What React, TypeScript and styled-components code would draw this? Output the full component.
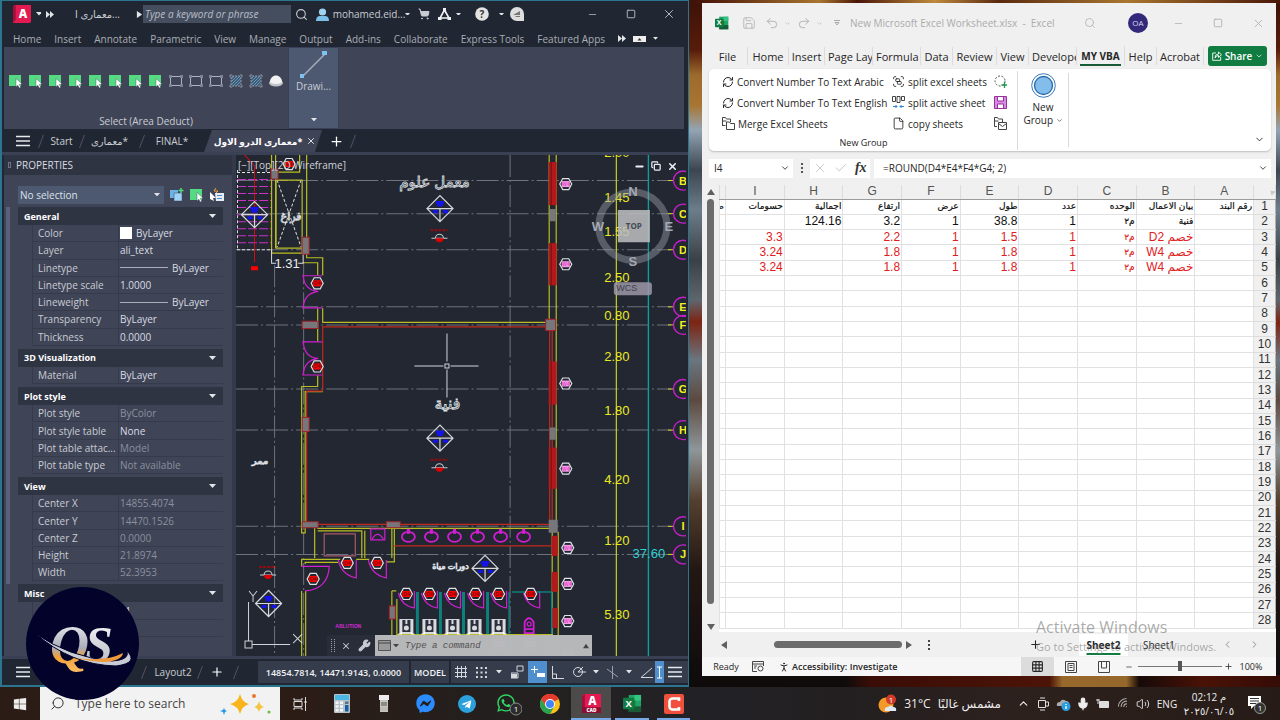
import React from 'react';
import styled, { createGlobalStyle, css } from 'styled-components';
import { Search, ShoppingCart, Save, Undo2, Redo2, X, Minus, Square, Plus, ChevronDown, ChevronUp, ChevronLeft, ChevronRight, Check, Wrench, RefreshCw, File, Group, Copy, Mic, Wifi, Volume2, Grid3x3, PersonStanding } from 'lucide-react';
import { FaWhatsapp, FaTelegramPlane, FaFacebookMessenger, FaWindows } from 'react-icons/fa';

const UI = '"Open Sans", "Noto Sans", "DejaVu Sans", sans-serif';
const SHEET = '"Liberation Sans", "DejaVu Sans", sans-serif';

const Global = createGlobalStyle`
  *, *::before, *::after { box-sizing: border-box; }
  body { margin: 0; background: #14100f; font-family: ${UI}; font-size: 10px; overflow: hidden; }
  button, input { font: inherit; color: inherit; margin: 0; padding: 0; border: 0; background: none; }
  button { display: inline-flex; align-items: center; justify-content: center; white-space: nowrap; }
  svg { flex: none; display: block; }
  h2, h3, dl, dd, p { margin: 0; font-weight: inherit; }
`;

const Page = styled.div`
  height: 100vh;
  display: flex;
  flex-direction: column;
`;

const Desktop = styled.main`
  flex: 1;
  min-height: 0;
  display: grid;
  grid-template-columns: minmax(0, 689fr) minmax(0, 574fr);
  gap: 13px;
  padding-right: 4px;
  background:
    linear-gradient(90deg, transparent 66%, #3a0d06 68%, #4d1408 82%, #96682b 83%, #96682b 88%, #160a08 89%, #4a1207 94%, #350c06) bottom / 100% 12px no-repeat,
    linear-gradient(90deg, transparent 54%, #4a1608 55%, #a9762f 64%, #4a1608 67%, #c08a3c 73%, #5a2a10 78%, #a9762f 88%, #4a1608) top / 100% 4px no-repeat,
    linear-gradient(180deg, #3d1208 0, #571c0a 50px, #9c6a2c 75px, #a87532 105px, #93a4b3 130px, #3c4650 170px, #6d7d8a 210px, #3a4146 260px, #5e666d 300px, #7d2412 322px, #6a7680 360px, #5c4a40 400px, #8f9699 450px, #54402f 500px, #231713 570px, #0e0b0b 687px);
`;

const Ico = styled.span<{ $w: number }>`
  flex: 0 0 ${p => p.$w}px;
  display: inline-flex;
  align-items: center;
  justify-content: center;
  overflow: hidden;
  white-space: nowrap;
`;
const IconButton = styled.button<{ $w: number; $on?: boolean }>`
  flex: 0 0 ${p => p.$w}px;
  align-self: stretch;
  ${p => p.$on && css`background: #4f8fcd;`}
`;
const Spring = styled.span`flex: 1;`;
const Loupe = styled(Search)`transform: scaleX(-1);`;
const Signal = styled(Wifi)`transform: rotate(-45deg);`;
const InlineChevron = styled(ChevronDown)`display: inline;`;

/* ---------- CAD window ---------- */
const CadWindow = styled.section`
  display: flex;
  flex-direction: column;
  min-width: 0;
  min-height: 0;
  border: 1px solid #2c7590;
  border-left-width: 2px;
  border-bottom-width: 2px;
  background: #212732;
  color: #c9ccd2;
`;
const CadTitle = styled.header`
  flex: 0 0 26px;
  display: flex;
  align-items: center;
  padding-left: 6px;
`;
const CadSearch = styled.input`
  flex: 0 0 148px;
  height: 18px;
  padding: 0 2px;
  background: #454e5f;
  font-style: italic;
  &::placeholder { color: #b9bec8; opacity: 1; }
`;
const CadMenu = styled.nav`
  flex: 0 0 20px;
  display: flex;
  align-items: center;
  gap: 13px;
  padding: 3px 0 0 11px;
  font-size: 10px;
  color: #a9adb6;
  overflow: hidden;
`;
const MenuMore = styled.span`
  display: flex;
  align-items: center;
  gap: 7px;
`;
const CadRibbon = styled.div`
  flex: 0 0 82px;
  display: flex;
  margin: 0 4px 0 2px;
  background: #3f4457;
`;
const DeductPanel = styled.div`
  flex: 0 0 284px;
  display: grid;
  grid-template-rows: 67px 15px;
  justify-items: center;
  font-size: 10px;
`;
const DeductTools = styled.div`
  display: flex;
  align-items: center;
`;
const DrawButton = styled.button`
  width: 51px;
  border: 1px solid #39405a;
  background: #4d5970;
  flex-direction: column;
  justify-content: flex-start;
  padding: 3px 0;
`;
const DrawLabel = styled.span`margin-bottom: 25px;`;
const FileTabs = styled.div`
  flex: 0 0 26px;
  display: flex;
  align-items: center;
  border-bottom: 3px solid #3b4155;
  padding: 1px 0 0 13px;
  font-size: 10px;
`;
const FileTab = styled.button<{ $w: number; $active?: boolean }>`
  flex: 0 0 ${p => p.$w}px;
  min-width: 0;
  height: 22px;
  ${p => p.$active && css`
    background: #3f4457;
    color: #fff;
    font-weight: 700;
    font-size: 9px;
    gap: 4px;
    padding-left: 4px;
    clip-path: polygon(8px 0, 100% 0, calc(100% - 7px) 100%, 0 100%);
  `}
`;
const CadBody = styled.div`
  flex: 1;
  min-height: 0;
  display: flex;
`;

const Panel = styled.aside`
  flex: 0 0 232px;
  display: flex;
  flex-direction: column;
  margin-left: 2px;
  background: #3f4457;
  border-right: 4px solid #343a4b;
`;
const PanelHead = styled.h2`
  flex: 0 0 20px;
  display: flex;
  align-items: center;
  gap: 5px;
  padding-left: 4px;
  background: #2f3442;
  font-size: 10px;
  color: #d9dbe0;
`;
const Grip = styled.span`
  width: 3px;
  height: 6px;
  border: 1px solid #6d7382;
`;
const Picker = styled.div`
  flex: 0 0 32px;
  display: flex;
  align-items: center;
  padding: 7px 0 0 14px;
  gap: 6px;
`;
const SelectBox = styled.select`
  width: 146px;
  height: 18px;
  border: 0;
  padding: 0 2px;
  appearance: none;
  background: #4c5970;
  color: #dfe2e8;
  font: 10px ${UI};
`;
const SelectWrap = styled.label`
  position: relative;
  display: block;
  & > svg { position: absolute; right: 4px; top: 7px; }
`;
const PropArea = styled.div`
  flex: 1;
  min-height: 0;
  display: flex;
  padding: 0 9px 16px 2px;
  gap: 8px;
  overflow: hidden;
`;
const PanelScroll = styled.div`
  width: 4px;
  height: 87%;
  background: #59627a;
`;
const PropList = styled.div`
  flex: 1;
  display: flex;
  flex-direction: column;
`;
const PropGroup = styled.section<{ $rows: number }>`
  flex: ${p => p.$rows} 0 auto;
  display: flex;
  flex-direction: column;
  margin-bottom: 3px;
`;
const GroupHead = styled.h3`
  flex: 0 0 18px;
  display: flex;
  align-items: center;
  justify-content: space-between;
  padding: 0 7px 0 6px;
  background: #2f3442;
  color: #fff;
  font-weight: 700;
  font-size: 9px;
`;
const PropRows = styled.dl`
  flex: 1;
  display: flex;
  flex-direction: column;
  margin-left: 14px;
  border-left: 1px solid #363b4c;
`;
const PropRow = styled.div`
  flex: 1 0 17px;
  display: grid;
  grid-template-columns: 86px 1fr;
  align-items: stretch;
  border-bottom: 1px solid #363b4c;
`;
const PropName = styled.dt`
  display: flex;
  align-items: center;
  padding-left: 5px;
  border-right: 1px solid #363b4c;
  white-space: nowrap;
`;
const PropValue = styled.dd<{ $dim?: boolean }>`
  display: flex;
  align-items: center;
  gap: 4px;
  padding-left: 1px;
  white-space: nowrap;
  color: ${p => (p.$dim ? '#8b909d' : '#dadce2')};
`;
const Swatch = styled.span`width: 12px; height: 12px; background: #fff;`;
const Rule = styled.span`width: 48px; height: 1px; background: #a9aebb;`;

const Viewport = styled.div`
  position: relative;
  flex: 1;
  min-width: 0;
  margin-right: 2px;
  overflow: hidden;
  background: #222732;
`;
const Canvas = styled.svg`
  position: absolute;
  inset: 0;
  width: 100%;
  height: 100%;
`;
const ViewLabel = styled.div`
  position: absolute;
  left: 2px;
  top: 3px;
  font-size: 10px;
  color: #cfd2d8;
`;
const ViewButtons = styled.div`
  position: absolute;
  right: 6px;
  top: 3px;
  display: flex;
  height: 16px;
  color: #eceef1;
`;
const CommandBar = styled.label`
  position: absolute;
  left: 91px;
  right: 94px;
  bottom: 0;
  height: 21px;
  display: flex;
  align-items: center;
  background: rgba(42, 47, 58, 0.9);
`;
const CommandField = styled.span`
  flex: 1;
  height: 21px;
  display: flex;
  align-items: center;
  gap: 2px;
  padding: 0 3px;
  background: rgba(214, 214, 214, 0.82);
  color: #444;
`;
const CommandInput = styled.input`
  flex: 1;
  min-width: 0;
  font: italic 9px "Liberation Mono", monospace;
  padding-left: 4px;
  &::placeholder { color: #505050; opacity: 1; }
`;
const CadStatus = styled.footer`
  flex: 0 0 29px;
  display: flex;
  align-items: center;
  border-top: 3px solid #3a4053;
  padding-left: 13px;
  overflow: hidden;
`;
const StatusCell = styled.button<{ $w: number }>`
  flex: 0 0 ${p => p.$w}px;
  height: 22px;
  margin-right: 2px;
  background: #353c4c;
  color: #f2f3f5;
  font-size: 9px;
  font-weight: 600;
`;
const StatusTools = styled.div`
  flex: 1;
  height: 22px;
  display: flex;
  background: #353c4c;
  overflow: hidden;
`;

/* ---------- Spreadsheet window ---------- */
const XlWindow = styled.section`
  display: flex;
  flex-direction: column;
  min-width: 0;
  min-height: 0;
  margin: 3px 0 11px;
  background: #f0f0f0;
  color: #262626;
`;
const XlTitle = styled.header`
  flex: 0 0 40px;
  display: flex;
  align-items: center;
  padding-left: 7px;
  color: #ababab;
`;
const Avatar = styled.span`
  width: 20px;
  height: 20px;
  border-radius: 50%;
  background: #33287a;
  color: #dcd9f0;
  font-size: 8px;
  line-height: 20px;
  text-align: center;
`;
const XlTabs = styled.nav`
  flex: 0 0 26px;
  display: flex;
  align-items: center;
  padding: 0 9px 0 6px;
`;
const XlTab = styled.button<{ $w: number; $active?: boolean; $cut?: boolean }>`
  flex: 0 1 ${p => p.$w}px;
  min-width: 0;
  height: 18px;
  overflow: hidden;
  border-right: 1px solid #dcdcdc;
  font-size: 11px;
  ${p => p.$cut && css`justify-content: flex-start; padding-left: 3px;`}
  ${p => p.$active && css`
    height: 20px;
    font-weight: 700;
    font-size: 10px;
    background: linear-gradient(#185c37, #185c37) center bottom / 41px 2px no-repeat;
  `}
`;
const Share = styled.button`
  margin-left: auto;
  width: 59px;
  height: 20px;
  gap: 3px;
  border-radius: 3px;
  background: #107c41;
  color: #fff;
  font-size: 10px;
  font-weight: 600;
`;
const XlRibbon = styled.div`
  flex: 0 0 82px;
  display: flex;
  margin: 0 5px 0 7px;
  border-radius: 5px;
  background: #fff;
  box-shadow: 0 1px 2px #bdbdbd;
`;
const XlGroup = styled.div`
  flex: 0 0 309px;
  display: grid;
  grid-template-columns: 170px 102px 1fr;
  grid-template-rows: repeat(3, 21px) 16px;
  align-items: center;
  margin: 2px 0 1px;
  padding-left: 13px;
  border-right: 1px solid #dadada;
  font-size: 10px;
`;
const Cmd = styled.button`
  justify-content: flex-start;
  gap: 3px;
  height: 21px;
`;
const GroupName = styled.div`
  grid-column: 1 / -1;
  padding-right: 12px;
  text-align: center;
  font-size: 9px;
`;
const BigButton = styled.button`
  flex: 0 0 51px;
  flex-direction: column;
  justify-content: flex-start;
  margin: 4px 0;
  border-right: 1px solid #dadada;
  line-height: 13px;
  gap: 3px;
`;
const RibbonEnd = styled.button`margin: auto 6px 6px auto;`;
const FormulaRow = styled.div`
  flex: 0 0 34px;
  display: flex;
  align-items: center;
  gap: 4px;
  padding: 0 5px 0 7px;
`;
const FieldBox = styled.label<{ $w?: number }>`
  flex: ${p => (p.$w ? `0 0 ${p.$w}px` : '1')};
  height: 19px;
  min-width: 0;
  display: flex;
  align-items: center;
  padding: 0 3px 0 5px;
  background: #fff;
`;
const FormulaBox = styled(FieldBox)`padding-left: 9px;`;
const FieldInput = styled.input`
  flex: 1;
  min-width: 0;
  font-size: 10px;
`;
const FxBox = styled.div`
  flex: 0 0 60px;
  height: 19px;
  display: flex;
  align-items: center;
  justify-content: space-around;
  background: #fff;
  color: #b5b5b5;
`;
const Fx = styled.span`
  font: italic 700 14px "Liberation Serif", serif;
  color: #333;
`;
const SheetArea = styled.div`
  flex: 1;
  min-height: 0;
  display: flex;
`;
const VBar = styled.div`
  flex: 0 0 17px;
  display: flex;
  flex-direction: column;
  align-items: center;
  gap: 3px;
  padding: 3px 0 1px;
`;
const VThumb = styled.span`
  flex: 1;
  width: 7px;
  border-radius: 4px;
  background: #6c6c6c;
  margin-bottom: 16px;
`;
const SheetBox = styled.div`
  flex: 1;
  min-width: 0;
  padding-bottom: 3px;
  background: #fff;
`;
const Sheet = styled.table`
  width: 100%;
  height: 100%;
  table-layout: fixed;
  border-collapse: collapse;
  font: 12px ${SHEET};
  line-height: 13px;
`;
const ColHead = styled.th<{ $w?: number }>`
  height: 14px;
  width: ${p => (p.$w ? `${p.$w}px` : 'auto')};
  padding: 0;
  background: #f0f0f0;
  border: solid #dcdcdc;
  border-width: 0 1px;
  border-bottom: 1px solid #9c9c9c;
  color: #555;
  font-weight: 400;
`;
const RowHead = styled.th`
  padding: 0;
  background: #f0f0f0;
  border-bottom: 1px solid #dcdcdc;
  border-right: 1px solid #b0b0b0;
  border-left: 0;
  color: #333;
  font-weight: 400;
`;
const Cell = styled.td<{ $red?: boolean; $ar?: boolean }>`
  padding: 0 1px;
  border: 1px solid #e1e1e1;
  text-align: right;
  white-space: nowrap;
  overflow: hidden;
  color: ${p => (p.$red ? '#e0201c' : '#111')};
  ${p => p.$ar && css`font-size: 9px; -webkit-text-stroke: 0.2px;`}
`;
const SheetTabs = styled.div`
  position: relative;
  flex: 0 0 25px;
  display: flex;
  align-items: center;
  background: #f0f0f0;
  font-size: 10px;
  padding-left: 18px;
`;
const HThumb = styled.span`
  flex: 0 0 128px;
  height: 7px;
  margin: 0 3px 0 46px;
  border-radius: 4px;
  background: #6c6c6c;
`;
const SheetTab = styled.button<{ $on?: boolean }>`
  width: ${p => (p.$on ? 49 : 62)}px;
  height: 22px;
  ${p => p.$on && css`
    background: #fff;
    font-weight: 700;
    text-decoration: underline #107c41 2px;
    text-underline-offset: 4px;
  `}
`;
const Watermark = styled.div`
  position: absolute;
  right: 50px;
  bottom: 1px;
  width: 190px;
  color: rgba(120, 120, 120, 0.62);
  font-size: 16px;
  line-height: 21px;
  white-space: nowrap;
  pointer-events: none;
`;
const WatermarkNote = styled.div`
  font-size: 11px;
  line-height: 18px;
`;
const XlStatus = styled.footer`
  flex: 0 0 19px;
  display: flex;
  align-items: center;
  padding-left: 2px;
  background: #f6f6f6;
  font-size: 9px;
`;
const Access = styled.button`
  gap: 2px;
  font-weight: 600;
  font-size: 9px;
`;
const ViewBtn = styled.button<{ $on?: boolean }>`
  width: 33px;
  height: 19px;
  background: ${p => (p.$on ? '#dcdcdc' : 'none')};
`;
const Zoom = styled.input`
  flex: 0 0 84px;
  width: 84px;
  min-width: 0;
  height: 12px;
  appearance: none;
  &::-webkit-slider-runnable-track { height: 1px; background: #777; }
  &::-webkit-slider-thumb { appearance: none; width: 4px; height: 10px; margin-top: -5px; background: #555; }
`;

/* ---------- Taskbar ---------- */
const Taskbar = styled.footer`
  flex: 0 0 33px;
  display: flex;
  align-items: center;
  padding-right: 4px;
  background: linear-gradient(90deg, #2c1c16 0, #2c1c16 23%, #241f1d 36%, #222226 56%, #231f20 66%, #2d211e 80%, #271b18 100%);
  color: #eee;
`;
const StartButton = styled.button`
  width: 40px;
  align-self: stretch;
`;
const TaskSearch = styled.label`
  flex: 0 0 240px;
  min-width: 0;
  align-self: stretch;
  display: flex;
  align-items: center;
  gap: 10px;
  padding-left: 10px;
  background: #f2f2f2;
  color: #333;
`;
const TaskInput = styled.input`
  flex: 1;
  width: 100%;
  min-width: 0;
  font-size: 12px;
  &::placeholder { color: #444; opacity: 1; }
`;
const TaskButton = styled.button<{ $w: number; $open?: boolean; $hot?: boolean }>`
  flex: 0 0 ${p => p.$w}px;
  align-self: stretch;
  ${p => p.$open && css`box-shadow: inset 0 -2px 0 #76a9e6;`}
  ${p => p.$hot && css`background: #4d4a4a;`}
`;
const Weather = styled.button`
  gap: 7px;
  font-size: 12px;
  margin-right: 12px;
`;
const Clock = styled.time`
  flex: 0 0 56px;
  text-align: center;
  font-size: 10px;
  line-height: 14px;
  white-space: nowrap;
`;
const ChannelLogo = styled.div`
  position: fixed;
  left: 26px;
  bottom: 20px;
  width: 113px;
  height: 113px;
  border-radius: 50%;
  overflow: hidden;
  background: #03022b;
`;

/* ---------- Small drawings ---------- */
const Caret = ({ c = '#e3e5e9', s = 7 }: { c?: string; s?: number }) => (
  <svg width={s} height={s / 7 * 4} viewBox="0 0 7 4"><path d="M0 0h7L3.5 4z" fill={c} /></svg>
);
const Tri = ({ r = 0, c = '#606060', s = 8 }: { r?: number; c?: string; s?: number }) => (
  <svg width={s} height={s} viewBox="0 0 8 8"><path d="M4 1l4 6H0z" fill={c} transform={`rotate(${r} 4 4)`} /></svg>
);
const Fast = () => (
  <svg width="8" height="7" viewBox="0 0 8 7"><path d="M0 0l4 3.500-4 3.500zM4 0l4 3.500-4 3.500z" fill="#e3e5e9" /></svg>
);
const Slash = () => (
  <svg width="6" height="13" viewBox="0 0 6 13"><path d="M5.500 0L.5 13" stroke="#4d5464" /></svg>
);
const Bars = ({ c = '#e8eaee' }: { c?: string }) => (
  <svg width="14" height="12" viewBox="0 0 14 12"><path d="M0 1.500h14M0 6h14M0 10.500h14" stroke={c} strokeWidth="1.600" /></svg>
);
const GreenPick = () => (
  <svg width="14" height="14" viewBox="0 0 14 14"><path d="M0 1h12v11H0z" fill="#55da84" /><path d="M7 4.500l6 5.500-2.800.4 1.600 2.900-1.600.6-1.500-2.900L7 13z" fill="#fff" stroke="#3f4457" strokeWidth=".4" /></svg>
);
const BoxIcon = ({ hatch }: { hatch?: boolean }) => (
  <svg width="14" height="14" viewBox="0 0 14 14" fill="none">
    {hatch ? <><path d="M2 2h10v10H2z" fill="#3f5a72" /><path d="M2 5l3-3M2 8l6-6M2 11l9-9M4 12l8-8M7 12l5-5" stroke="#72b2da" strokeWidth=".7" /><path d="M2 0v14M12 0v14M0 2h14M0 12h14" stroke="#8f95a5" strokeDasharray="2 1" /></>
      : <><path d="M1.500 2.500h11v9h-11z" stroke="#aeb3c0" /><path d="M0 1h3v3H0zM11 1h3v3h-3zM0 10h3v3H0zM11 10h3v3h-3z" fill="#7c8396" /></>}
  </svg>
);
const Dome = () => (
  <svg width="14" height="12" viewBox="0 0 14 12"><ellipse cx="7" cy="8" rx="7" ry="3.500" fill="#bfc3c9" /><path d="M1 7c0-4 3-6.500 6-6.500S13 3 13 7c-1 2.500-11 2.500-12 0z" fill="#f2f2f2" /></svg>
);
const ExcelLogo = ({ s }: { s: number }) => (
  <svg width={s} height={s} viewBox="0 0 20 20">
    <path d="M6 1h13v18H6z" fill="#21a366" /><path d="M12 1h7v6h-7z" fill="#33c481" /><path d="M6 7h7v6H6z" fill="#107c41" /><path d="M6 13h13v6H6z" fill="#185c37" />
    <rect x="0" y="4" width="12" height="12" rx="1" fill="#107c41" /><text x="6" y="13.500" textAnchor="middle" fontFamily="Open Sans" fontWeight="700" fontSize="10" fill="#fff">X</text>
  </svg>
);
const CadLogo = ({ s, sub }: { s: number; sub?: boolean }) => (
  <svg width={s} height={s} viewBox="0 0 20 20">
    <path d="M2 0h18v18a2 2 0 0 1-2 2H0V2z" fill="#e21a51" /><path d="M0 2l3-2v16l-3 4z" fill="#a30f38" />
    <text x="11" y={sub ? 12 : 14} textAnchor="middle" fontFamily="Open Sans" fontWeight="800" fontSize={sub ? 12 : 13} fill="#fff">A</text>
    {sub && <><path d="M0 14h20v6H0z" fill="#8e0d33" /><text x="10" y="19" textAnchor="middle" fontFamily="Open Sans" fontWeight="800" fontSize="5" fill="#fff">CAD</text></>}
  </svg>
);
const CalcIcon = () => (
  <svg width="16" height="19" viewBox="0 0 16 19"><rect width="16" height="19" rx="1" fill="#b9c2c8" /><path d="M1 1h14v5H1z" fill="#4bb7e4" /><path d="M1.500 7.500h3v2.500h-3zM6 7.500h3v2.500H6zM1.500 11.200h3v2.500h-3zM6 11.200h3v2.500H6zM1.500 15h3v2.500h-3zM6 15h3v2.500H6z" fill="#f3f5f6" /><path d="M11 7.500h3.500V10H11z" fill="#5a7186" /><path d="M11 11h3.500v6.500H11z" fill="#1261a6" /></svg>
);
const DeviceIcon = () => (
  <svg width="10" height="19" viewBox="0 0 10 19"><path d="M0 1h10v5H0z" fill="#ececec" /><path d="M1 6h8v12H1z" fill="#c9c6c1" /><path d="M2 8h6v4H2z" fill="#8d8984" /><path d="M1 14h8M1 16h8" stroke="#a5a19c" strokeWidth=".6" /></svg>
);
const ChromeIcon = () => (
  <svg width="20" height="20" viewBox="0 0 20 20">
    <circle cx="10" cy="10" r="10" fill="#fbc116" /><path d="M10 10L1.340 5A10 10 0 0 1 18.660 5z" fill="#e33b2e" /><path d="M10 5h8.700a10 10 0 0 0-17.400 0L5.700 12.500z" fill="#e33b2e" /><path d="M1.340 5A10 10 0 0 0 10 20l4.300-7.500H5.700z" fill="#29a352" /><circle cx="10" cy="10" r="5" fill="#fff" /><circle cx="10" cy="10" r="4" fill="#4285f4" />
  </svg>
);
const Recorder = () => (
  <svg width="20" height="20" viewBox="0 0 20 20"><rect width="20" height="20" rx="2" fill="#f0503c" /><path d="M15 7V4.500H8.500A3 3 0 0 0 5.500 7.500v5a3 3 0 0 0 3 3H15V13" fill="none" stroke="#fff" strokeWidth="2.600" /></svg>
);
const Sparkles = () => (
  <svg width="62" height="26" viewBox="0 0 62 26">
    <path d="M22 3q2 8 9 10-7 2-9 10-2-8-10-10 8-2 10-10z" fill="#f8b51c" /><path d="M41 10q1 5 5 6-4 1-5 5-1-4-5-5 4-1 5-6z" fill="#f4c542" /><circle cx="36" cy="5" r="2" fill="#e8772c" /><circle cx="51" cy="21" r="1.600" fill="#6cc04a" /><path d="M6 17l1 2 2 1-2 1-1 3-1-3-3-1 3-1z" fill="#1e9be0" />
  </svg>
);

const QsLogo = () => (
  <svg width="113" height="113" viewBox="0 0 113 113">
    <defs>
      <linearGradient id="silver" x1="0" y1="0" x2="0" y2="1"><stop offset="0" stopColor="#fff" /><stop offset=".55" stopColor="#a9adb8" /><stop offset=".7" stopColor="#f0a03a" /><stop offset="1" stopColor="#ffc36b" /></linearGradient>
      <linearGradient id="silver2" x1="0" y1="0" x2="0" y2="1"><stop offset="0" stopColor="#fff" /><stop offset="1" stopColor="#a9adb8" /></linearGradient>
    </defs>
    <g fontFamily="Liberation Serif" fontStyle="italic">
      <text x="24" y="76" fontSize="54" fontWeight="700" fill="url(#silver)">Q</text>
      <text x="59" y="74" fontSize="50" fontWeight="700" fill="url(#silver2)">S</text>
    </g>
    <path d="M9 46Q42 70 86 74Q104 73 101 64Q113 76 90 79Q45 78 9 46z" fill="#c9ccd4" stroke="#03022b" />
    <path d="M50 71Q80 75 97 66Q96 74 78 75Q62 74 50 71z" fill="#f0993a" />
  </svg>
);

/* ---------- Floor plan ---------- */
const axes: [string, number][] = [['B', 180], ['C', 213], ['D', 249], ['E', 306], ['F', 324], ['G', 388], ['H', 429], ['I', 525], ['J', 553]];
const dims: [string, number][] = [['2.00', 152], ['1.45', 197], ['1.55', 231], ['2.50', 277], ['0.80', 315], ['2.80', 356], ['1.80', 409], ['4.20', 478], ['1.20', 539], ['5.30', 613]];

const Hex = ({ x, y, tone, label }: { x: number; y: number; tone: string; label: string }) => (
  <g transform={`translate(${x} ${y})`}>
    <path d="M-6 0l3-5.500h6l3 5.500-3 5.500h-6z" fill="#222732" stroke="#e0e2e6" strokeWidth="1.200" />
    <path d="M-4-3h8v6h-8z" fill={tone} />
    <text y="2" textAnchor="middle" fontSize="5" fontWeight="700" fill={tone === '#f00' ? '#8e0000' : '#e050c8'}>{label}</text>
  </g>
);
const Diamond = ({ x, y }: { x: number; y: number }) => (
  <g transform={`translate(${x} ${y})`} fill="none" stroke="#d5d8dd">
    <path d="M-13 0L0-13 13 0 0 13zM-13 0h26M0 0v13" strokeWidth="1.200" />
    <path d="M-4-6h8M-3-3.500h6" stroke="#1414e6" strokeWidth="3" />
    <path d="M-7 3h5M3 3h5" stroke="#1414e6" strokeWidth="3" />
  </g>
);
const Level = ({ x, y }: { x: number; y: number }) => (
  <g transform={`translate(${x} ${y})`}>
    <path d="M-8 0h16M-4 0a4 4 0 0 1 8 0" fill="none" stroke="#c8cbd0" />
    <path d="M-4 0a4 4 0 0 0 8 0z" fill="#e00000" />
    <path d="M-9-8h17" stroke="#8e0d12" strokeWidth="2" strokeDasharray="3 1" />
  </g>
);
const Pan = ({ x }: { x: number }) => (
  <g transform={`translate(${x} 625)`}>
    <path d="M-7-7h14v15h-14z" fill="#d9dbdf" /><path d="M-4-6h3v4h-3zM1-6h3v4H1zM-4-2h8v8h-8z" fill="#2b303c" /><circle cy="2" r="2.500" fill="#d9dbdf" /><path d="M-8 8h3v-2M8 8H5V6" stroke="#fff" fill="none" />
  </g>
);

const Plan = () => (
  <Canvas viewBox="236 155 449 501" preserveAspectRatio="xMinYMin slice" fontFamily="Liberation Sans, DejaVu Sans, sans-serif" fill="none">
    <g stroke="#6d727c" strokeDasharray="22 3 2 3">
      {axes.map(([n, y]) => <path key={n} d={`M236 ${y + .5}H670`} />)}
      <path d="M274.500 265V656M303.500 262V656M509.500 155V656" />
    </g>
    <g>
      {Array.from({ length: 12 }, (_, i) => (
        <path key={i} d={`M237 ${172.500 + i * 7}H271`} stroke={i % 11 === 0 ? '#e5e5e5' : '#c733c7'} strokeDasharray={i % 11 === 0 ? '3 2' : '9 2'} />
      ))}
      <path d="M237.500 170V249M277 180L301 247M301 180L277 247" stroke="#d8d8d8" strokeDasharray="3 2" />
      <path d="M242 152L254.500 166V262" stroke="#d00f14" />
      <path d="M251 266h7v4h-7z" fill="#f00" />
    </g>
    <g stroke="#b9bd23" strokeWidth="1.200">
      <path d="M271.500 155V253H302V180H276V248H302M275.500 155V248M299.500 155V172H278M306.500 155V257.500H322.500V275M302.500 262.500H317.500V275M322.500 308V322H548M317.500 308V341M317.500 375V386H301.500V532H305V391H322.500" />
      <path d="M317 527.500H549M314.500 527V557M317.500 530H361.500V557M364.500 530V557M391.500 527V557M394 527V561H386M301.500 565V558.500H340M305 563V561.500H338M356 558.500H369M301.500 590V656M305.500 590V656M391.500 590H396M391.500 590V636M396.500 598V636M396 633.500H552" />
      <path d="M548.500 155V322M555.500 155V520M551.500 531V656M557.500 531V656" />
      <path d="M615.500 155V656" stroke="#cdcf20" />
    </g>
    <path d="M271.500 249V263H276M303 249V263H298" stroke="#ddd" />
    <g stroke="#c22a1d" strokeWidth="1.200">
      <path d="M322.500 390V326.500H549V523.500H306.500V390.500H322M549 330V519M551.500 330V519M394 545H551" />
    </g>
    <g fill="#b3191b">
      {[[162, 43], [243, 42], [361, 43], [447, 41]].map(([y, h]) => <path key={y} d={`M548 ${y}h8v${h}h-8z`} />)}
      {[535, 571, 607].map(y => <path key={y} d={`M551 ${y}h6v20h-6z`} />)}
      <path d="M553 636h5v20h-5z" opacity=".7" />
    </g>
    <path d="M550.500 162V205M550.500 243V285M550.500 361V404M550.500 447V488" stroke="#6e1216" />
    <g fill="#77777b" stroke="#a3222a">
      <path d="M271 169h7v10h-7zM302 237h7v17h-7zM302 321h16v7h-16zM302 417h7v14h-7zM302 521h16v6h-16zM386 521h14v6h-14zM545 319h10v11h-10zM389 605h6v13h-6z" />
      <path d="M549 209h6v12h-6zM549 427h6v12h-6zM548 519h9v13h-9z" stroke="none" />
    </g>
    <g stroke="#cf1fd0" strokeWidth="1.200">
      <path d="M302 275.500H322M302 307.500H322M303 275Q304 290 318 291Q304 293 303 307M302 341.500H322M302 374.500H322M303 341Q304 357 318 358Q304 360 303 374" />
      <path d="M301 565.500H329Q328 588 305 590M338 559Q341 574 356 577V559M368 559Q371 574 386 577V559" />
      <path d="M370.500 528h14v11h-14zM372 538q5-9 11 0" />
      {[408, 431, 454, 477, 500, 523].map(x => <g key={x}><ellipse cx={x} cy="536" rx="6.500" ry="5" strokeWidth="1.800" /><path d="M0-3v5" strokeWidth="3" transform={`translate(${x} 531)`} /></g>)}
      {[398, 421, 444, 467, 490, 523].map(x => <path key={x} d={`M${x} 592q3 13 16 15v-17`} />)}
      <path d="M524 632V621q4-8 9 0v11zM525 628h7" strokeWidth="1.800" />
      <circle cx="528.500" cy="623" r="2" />
    </g>
    <path d="M324 533h31v22h-31z" stroke="#a8596a" strokeWidth="1.200" />
    <g stroke="#0e7f7a" strokeWidth="3">{[417, 440, 463, 487].map(x => <path key={x} d={`M${x} 591V633`} />)}</g>
    <path d="M508.500 591V633M511.500 591H551V633" stroke="#0e7f7a" strokeWidth="1.500" />
    {[406, 429, 452, 474, 498].map(x => <Pan key={x} x={x} />)}
    {[[289, 164], [317, 283], [317, 366], [347, 562], [377, 562], [313, 578], [406, 593], [429, 593], [452, 593], [475, 593], [498, 593], [530, 593]].map(([x, y]) => <Hex key={`${x}-${y}`} x={x} y={y} tone="#f00" label="D4" />)}
    {[[565, 184], [565, 264], [565, 383], [565, 468], [567, 547], [567, 583], [567, 620], [567, 655], [475, 643], [498, 643], [529, 643]].map(([x, y]) => <Hex key={`${x}-${y}`} x={x} y={y} tone="#f59ae6" label="W4" />)}
    {[[254, 214], [439, 208], [439, 437], [484, 567], [268, 602]].map(([x, y]) => <Diamond key={`${x}-${y}`} x={x + .5} y={y + .5} />)}
    {[[439, 238], [439, 467], [268, 574]].map(([x, y]) => <Level key={y} x={x} y={y} />)}
    <g fill="#222732" stroke="#dfe1e5" strokeWidth=".8" textAnchor="middle">
      <text x="434" y="187" fontSize="15">معمل علوم</text>
      <text x="447" y="408" fontSize="16">فنية</text>
      <text x="291" y="220" fontSize="11">فراغ</text>
      <text x="260" y="463" fontSize="10">ممر</text>
      <text x="450" y="568" fontSize="8">دورات مياة</text>
    </g>
    <text x="348" y="627" textAnchor="middle" fontSize="5" fontWeight="700" fill="#d428d4">ABLUTION</text>
    <text x="287" y="268" textAnchor="middle" fontSize="13" fill="#eceef0">1.31</text>
    <path d="M647.500 155V656" stroke="#169a9c" strokeWidth="1.400" />
    <g fontSize="13" textAnchor="middle" fill="#e8ea22">{dims.map(([t, y]) => <text key={y} x="616" y={y + 5}>{t}</text>)}</g>
    <text x="648" y="557" textAnchor="middle" fontSize="13" fill="#2fd0d4">37.60</text>
    {axes.map(([n, y]) => (
      <g key={n}>
        <path d={`M667 ${y + .5}h5`} stroke="#d8da22" />
        <circle cx="682" cy={y + .5} r="9.500" stroke="#c420c8" strokeWidth="1.400" />
        <text x="682" y={y + 4.500} textAnchor="middle" fontSize="11" fontWeight="700" fill="#f0f020">{n}</text>
      </g>
    ))}
    <path d="M446.500 333V361M446.500 369V397M414 365.500H443M450 365.500H478M444.500 363.500h4v4h-4z" stroke="#d0d3d8" />
    <path d="M248.500 601V640M252 643.500H290M245 640h7v7h-7zM249 590l4 5 4-5M253 595v6M293 633l9 9M302 633l-9 9" stroke="#d0d3d8" />
    <circle cx="632" cy="226" r="34" stroke="#9a9ea8" strokeOpacity=".45" strokeWidth="7" />
    <path d="M617 210h32v32h-32z" fill="#b9bcbe" fillOpacity=".88" />
    <text x="633" y="229" textAnchor="middle" fontFamily="Open Sans" fontWeight="700" fontSize="8" fill="#444b55">TOP</text>
    <g fontSize="13" fontWeight="700" fill="#a5a9b3" textAnchor="middle">
      <text x="632" y="196">N</text><text x="597" y="231">W</text><text x="668" y="231">E</text><text x="632" y="266">S</text>
    </g>
    <rect x="613" y="282" width="38" height="13" rx="3" fill="#9d98a8" fillOpacity=".85" />
    <text x="626" y="291" textAnchor="middle" fontSize="9" fill="#3d4250">WCS</text>
  </Canvas>
);

/* ---------- Data ---------- */
type Prop = { n: string; v: string; dim?: boolean; kind?: 'swatch' | 'line' };
const groups: { title: string; rows: Prop[] }[] = [
  { title: 'General', rows: [
    { n: 'Color', v: 'ByLayer', kind: 'swatch' }, { n: 'Layer', v: 'ali_text' }, { n: 'Linetype', v: 'ByLayer', kind: 'line' },
    { n: 'Linetype scale', v: '1.0000' }, { n: 'Lineweight', v: 'ByLayer', kind: 'line' }, { n: 'Transparency', v: 'ByLayer' }, { n: 'Thickness', v: '0.0000' }] },
  { title: '3D Visualization', rows: [{ n: 'Material', v: 'ByLayer' }] },
  { title: 'Plot style', rows: [{ n: 'Plot style', v: 'ByColor', dim: true }, { n: 'Plot style table', v: 'None' }, { n: 'Plot table attac...', v: 'Model', dim: true }, { n: 'Plot table type', v: 'Not available', dim: true }] },
  { title: 'View', rows: [{ n: 'Center X', v: '14855.4074', dim: true }, { n: 'Center Y', v: '14470.1526', dim: true }, { n: 'Center Z', v: '0.0000', dim: true }, { n: 'Height', v: '21.8974', dim: true }, { n: 'Width', v: '52.3953', dim: true }] },
  { title: 'Misc', rows: [{ n: '', v: '1' }, { n: '', v: '' }] },
];
const cadMenu = ['Home', 'Insert', 'Annotate', 'Parametric', 'View', 'Manage', 'Output', 'Add-ins', 'Collaborate', 'Express Tools', 'Featured Apps'];
const xlTabs: [string, number][] = [['File', 40], ['Home', 41], ['Insert', 36], ['Page Layout', 48], ['Formula', 48], ['Data', 32], ['Review', 44], ['View', 32], ['Developer', 48], ['MY VBA', 48], ['Help', 32], ['Acrobat', 47]];
const letters = ['A', 'B', 'C', 'D', 'E', 'F', 'G', 'H', 'I', ''];
const sheet: string[][] = [
  ['رقم البند', 'بيان الاعمال', 'الوحده', 'عدد', 'طول', 'عرض', 'ارتفاع', 'اجمالية', 'حسومات', 'ص'],
  ['', 'فنية', 'م٢', '1', '38.8', '1', '3.2', '124.16', '', ''],
  ['', 'خصم D2', 'م٢', '1', '1.5', '1', '2.2', '', '3.3', ''],
  ['', 'خصم W4', 'م٢', '1', '1.8', '1', '1.8', '', '3.24', ''],
  ['', 'خصم W4', 'م٢', '1', '1.8', '1', '1.8', '', '3.24', ''],
];

const CadApp = () => (
  <CadWindow>
    <CadTitle>
      <Ico $w={28}><CadLogo s={18} /></Ico>
      <Ico $w={5}><Caret s={6} /></Ico>
      <Ico $w={18}><Fast /></Ico>
      <Ico $w={77}>معماری ا...</Ico>
      <Ico $w={7}><Tri r={90} c="#e3e5e9" s={7} /></Ico>
      <CadSearch aria-label="Search" placeholder="Type a keyword or phrase" />
      <IconButton $w={20} aria-label="Find"><Search size={13} /></IconButton>
      <Ico $w={22}><svg width="13" height="13" viewBox="0 0 13 13"><circle cx="6.500" cy="4" r="3.600" fill="#9fd3f2" /><path d="M0 13q0-5 4-5h5q4 0 4 5z" fill="#7cc0ea" /></svg></Ico>
      <Ico $w={72}>mohamed.eid...</Ico>
      <Ico $w={5}><Caret s={5} /></Ico>
      <Ico $w={27}><ShoppingCart size={12} fill="#c9ccd2" /></Ico>
      <Ico $w={14}><svg width="13" height="12" viewBox="0 0 13 12"><path d="M6.500 2L2 10h9z" fill="none" stroke="#eef0f2" strokeWidth="1.600" /><path d="M5 0h3v3H5zM0 9h3.500v3H0zM9.500 9H13v3H9.500z" fill="#eef0f2" /></svg></Ico>
      <Ico $w={14}><Caret s={5} /></Ico>
      <Ico $w={33}><svg width="14" height="14" viewBox="0 0 14 14"><circle cx="7" cy="7" r="6.800" fill="#e3e3e3" /><text x="7" y="10.500" fontSize="10" fontWeight="700" textAnchor="middle" fill="#333">?</text></svg></Ico>
      <Ico $w={6}><Caret s={5} /></Ico>
      <Ico $w={26}><svg width="14" height="14" viewBox="0 0 14 14"><path d="M7 0a7 7 0 0 1 7 7v7H7A7 7 0 0 1 7 0z" fill="#dedede" /><path d="M3 8l7-4v4zM5 9h5v1H6z" fill="#777" /></svg></Ico>
      <Spring />
      <IconButton $w={38} aria-label="Minimize"><Minus size={11} strokeWidth={1.500} /></IconButton>
      <IconButton $w={39} aria-label="Maximize"><Square size={10} strokeWidth={2} /></IconButton>
      <IconButton $w={38} aria-label="Close"><X size={14} strokeWidth={1.500} /></IconButton>
    </CadTitle>
    <CadMenu>
      {cadMenu.map(m => <button key={m}>{m}</button>)}
      <MenuMore><Fast /><svg width="13" height="6"><path d="M0 0h13v6H0z" fill="#eee" /><path d="M6.500 2L8.500 4.500h-4z" fill="#333" /></svg><Caret s={5} /></MenuMore>
    </CadMenu>
    <CadRibbon>
      <DeductPanel>
        <DeductTools>
          {Array.from({ length: 8 }, (_, i) => <IconButton $w={20} key={i} aria-label="Select"><GreenPick /></IconButton>)}
          {[0, 1, 2].map(i => <IconButton $w={20} key={i} aria-label="Boundary"><BoxIcon /></IconButton>)}
          {[0, 1].map(i => <IconButton $w={20} key={i} aria-label="Hatch"><BoxIcon hatch /></IconButton>)}
          <IconButton $w={20} aria-label="Solid"><Dome /></IconButton>
        </DeductTools>
        Select (Area Deduct)
      </DeductPanel>
      <DrawButton>
        <svg width="28" height="28" viewBox="0 0 28 28"><path d="M3 25L25 3" stroke="#a7afbd" strokeWidth="1.500" /><path d="M22 0h5v4h-5zM0 23h4v4H0z" fill="#7fc1ee" /></svg>
        <DrawLabel>Drawi...</DrawLabel>
        <Caret s={6} />
      </DrawButton>
    </CadRibbon>
    <FileTabs>
      <Ico $w={16}><Bars /></Ico>
      <Ico $w={20}><Slash /></Ico>
      <FileTab $w={21}>Start</FileTab>
      <Ico $w={20}><Slash /></Ico>
      <FileTab $w={35}>معماری*</FileTab>
      <Ico $w={30}><Slash /></Ico>
      <FileTab $w={30}>FINAL*</FileTab>
      <Ico $w={17} />
      <FileTab $w={118} $active>معماری الدرو الاول* <X size={10} /></FileTab>
      <Ico $w={28}><Plus size={15} color="#fff" /></Ico>
      <Slash />
    </FileTabs>
    <CadBody>
      <Panel>
        <PanelHead><Grip />PROPERTIES</PanelHead>
        <Picker>
          <SelectWrap><SelectBox aria-label="Selection"><option>No selection</option></SelectBox><Caret s={6} /></SelectWrap>
          <svg width="14" height="14" viewBox="0 0 14 14"><path d="M0 2h8v8H0z" fill="#6db3e8" /><path d="M4 5h8v8H4z" fill="#9fd3f7" stroke="#3f4457" strokeWidth=".5" /><path d="M11 0v5M8.500 2.500h5" stroke="#4fdc80" strokeWidth="1.500" /></svg>
          <GreenPick />
          <svg width="14" height="14" viewBox="0 0 14 14"><path d="M0 4l6 6H3l1 3-4-2z" fill="#fff" /><path d="M6 0L4 3h4L6 5" stroke="#eda83a" fill="none" /><path d="M5 5h9v8H6z" fill="#e6edf5" /><path d="M7 7.500h5M7 10.500h5" stroke="#4d8fc9" /></svg>
        </Picker>
        <PropArea>
          <PanelScroll />
          <PropList>
            {groups.map(g => (
              <PropGroup key={g.title} $rows={g.rows.length}>
                <GroupHead>{g.title}<Caret /></GroupHead>
                <PropRows>
                  {g.rows.map((r, i) => (
                    <PropRow key={i}>
                      <PropName>{r.n}</PropName>
                      <PropValue $dim={r.dim}>
                        {r.kind === 'swatch' && <Swatch />}
                        {r.kind === 'line' && <Rule />}
                        {g.title === 'Misc' ? <>&nbsp;&nbsp;{r.v}</> : r.v}
                      </PropValue>
                    </PropRow>
                  ))}
                </PropRows>
              </PropGroup>
            ))}
          </PropList>
        </PropArea>
      </Panel>
      <Viewport>
        <Plan />
        <ViewLabel>[−][Top][2D Wireframe]</ViewLabel>
        <ViewButtons>
          <IconButton $w={16} aria-label="Minimize drawing"><Minus size={11} strokeWidth={4} /></IconButton>
          <IconButton $w={17} aria-label="Restore drawing"><Copy size={10} strokeWidth={3} /></IconButton>
          <IconButton $w={16} aria-label="Close drawing"><X size={11} strokeWidth={3.500} /></IconButton>
        </ViewButtons>
        <CommandBar>
          <Ico $w={12}><svg width="4" height="14"><path d="M.5 0v14M3.500 0v14" stroke="#9a9eaa" strokeDasharray="1 1" /></svg></Ico>
          <Ico $w={14}><X size={10} strokeWidth={2.500} /></Ico>
          <Ico $w={22}><Wrench size={13} fill="#c9ccd2" /></Ico>
          <CommandField>
            <svg width="13" height="11"><path d="M.5.5h12v10H.5z" fill="#999" stroke="#555" /><path d="M1 3h12" stroke="#444" /></svg><Caret c="#444" s={6} />
            <CommandInput placeholder="Type a command" aria-label="Command" />
            <Tri c="#444" s={6} />
          </CommandField>
        </CommandBar>
      </Viewport>
    </CadBody>
    <CadStatus>
      <Ico $w={16}><Bars /></Ico>
      <Ico $w={20}><Slash /></Ico>
      <Ico $w={82}>Model</Ico>
      <Ico $w={21}><Slash /></Ico>
      <Ico $w={38}>Layout2</Ico>
      <Ico $w={16}><Slash /></Ico>
      <Ico $w={18}><Plus size={14} color="#fff" /></Ico>
      <Ico $w={19}><Slash /></Ico>
      <Ico $w={13} />
      <StatusCell $w={151}>14854.7814, 14471.9143, 0.0000</StatusCell>
      <StatusCell $w={38}>MODEL</StatusCell>
      <StatusTools>
        <IconButton $w={20} aria-label="Grid"><svg width="12" height="12"><path d="M2.500 0v12M6.500 0v12M10.500 0v12M0 2.500h12M0 6.500h12M0 10.500h12" stroke="#d5d8de" /></svg></IconButton>
        <IconButton $w={20} aria-label="Snap"><svg width="11" height="11"><path d="M1 0v11M5.500 0v11M10 0v11" stroke="#d5d8de" strokeWidth="2" strokeDasharray="2 2.500" /></svg></IconButton>
        <Ico $w={15}><Caret s={6} /></Ico>
        <IconButton $w={22} aria-label="Infer"><svg width="13" height="14"><path d="M6 1h6v5H6zM2 8h5v5H0V8z" fill="none" stroke="#d5d8de" /><path d="M0 9h6v4H0z" fill="#d5d8de" /></svg></IconButton>
        <IconButton $w={19} $on aria-label="Dynamic input"><svg width="14" height="12"><path d="M3.500 0v7M0 3.500h7" stroke="#fff" /><path d="M6 7h8v4H6z" fill="#fff" /></svg></IconButton>
        <IconButton $w={21} aria-label="Ortho"><svg width="13" height="13"><path d="M1.500 0v12.500H13M1.500 8h4v4" fill="none" stroke="#d5d8de" /></svg></IconButton>
        <IconButton $w={21} aria-label="Polar"><svg width="14" height="12"><circle cx="6" cy="6" r="4.500" fill="none" stroke="#d5d8de" /><path d="M6 6h8M6 6l5-5" stroke="#d5d8de" /></svg></IconButton>
        <Ico $w={14}><Caret s={6} /></Ico>
        <IconButton $w={18} aria-label="Isometric"><svg width="11" height="13"><path d="M5.500 0v13M0 3l11 8" stroke="#9ba0ac" /></svg></IconButton>
        <Ico $w={16}><Caret s={6} /></Ico>
        <IconButton $w={18} aria-label="Tracking"><svg width="13" height="11"><path d="M12 1L1 10.500h12" fill="none" stroke="#d5d8de" /></svg></IconButton>
        <IconButton $w={9} $on aria-label="Object snap"><svg width="5" height="13"><path d="M0 1h5M0 12h5M2.500 1v11" stroke="#fff" /></svg></IconButton>
        <IconButton $w={22} aria-label="Customize"><Bars /></IconButton>
      </StatusTools>
    </CadStatus>
  </CadWindow>
);

const rotate = <RefreshCw size={12} strokeWidth={2} />;

const XlApp = () => (
  <XlWindow>
    <XlTitle>
      <Ico $w={26}><ExcelLogo s={14} /></Ico>
      <Ico $w={27}><Save size={14} strokeWidth={1.300} /></Ico>
      <Ico $w={20}><Undo2 size={14} strokeWidth={1.500} /></Ico><Ico $w={11}><ChevronDown size={7} /></Ico>
      <Ico $w={22}><Redo2 size={14} strokeWidth={1.500} /></Ico><Ico $w={9}><ChevronDown size={7} /></Ico>
      <Ico $w={26}><svg width="6" height="6"><path d="M0 .5h6M1 2.500h4L3 5z" fill="none" stroke="#ababab" /></svg></Ico>
      <span>New Microsoft Excel Worksheet.xlsx&nbsp; -&nbsp; Excel</span>
      <Spring />
      <IconButton $w={52} aria-label="Search"><Search size={12} strokeWidth={1.500} /></IconButton>
      <Ico $w={44}><Avatar>OA</Avatar></Ico>
      <IconButton $w={36} aria-label="Minimize"><Minus size={11} strokeWidth={1.500} /></IconButton>
      <IconButton $w={44} aria-label="Maximize"><Square size={10} strokeWidth={2} /></IconButton>
      <IconButton $w={36} aria-label="Close"><X size={13} strokeWidth={1.500} /></IconButton>
    </XlTitle>
    <XlTabs>
      {xlTabs.map(([t, w]) => <XlTab key={t} $w={w} $active={t === 'MY VBA'} $cut={t === 'Page Layout' || t === 'Developer' || t === 'Formula'}>{t}</XlTab>)}
      <Share><svg width="10" height="10" viewBox="0 0 10 10"><path d="M4 2H.7v7.300h8V6M3 7q0-4 3.500-4V1l3 2.800-3 2.700v-2Q4 4.500 3 7z" fill="none" stroke="#fff" strokeWidth=".9" /></svg>Share<ChevronDown size={8} /></Share>
    </XlTabs>
    <XlRibbon>
      <XlGroup>
        <Cmd>{rotate}Convert Number To Text Arabic</Cmd>
        <Cmd><Group size={13} strokeWidth={1.600} />split excel sheets</Cmd>
        <Cmd aria-label="Select objects"><svg width="13" height="13"><circle cx="6" cy="6" r="5" fill="none" stroke="#555" strokeDasharray="2 1.500" /><path d="M10.500 7v6M7.500 10h6" stroke="#1d9a4b" strokeWidth="1.300" /></svg></Cmd>
        <Cmd>{rotate}Convert Number To Text English</Cmd>
        <Cmd><svg width="13" height="13"><path d="M.5.5h3v5h-3zM5 .5h3v6H5zM9.500 .5h3v4h-3z" fill="none" stroke="#444" /><path d="M1 10.500h4M12 10.500H8M3.500 9L5 10.500 3.500 12M9.500 9L8 10.500 9.500 12" fill="none" stroke="#2a86d6" /></svg>split active sheet</Cmd>
        <Cmd aria-label="Save"><svg width="13" height="13"><path d="M.5.5h12v12h-12z" fill="#d68be0" stroke="#98309f" /><path d="M3.500 1v4h6V1M3.500 12V8h6v4" fill="#fff" stroke="#98309f" /></svg></Cmd>
        <Cmd><svg width="13" height="13"><path d="M.5 9V.5h3l1 1.500h4v3M.5 4h4M.5 8.500h3M4.500 12.500V5h3l1 1.500h4v6z" fill="none" stroke="#444" /></svg>Merge Excel Sheets</Cmd>
        <Cmd><File size={13} strokeWidth={1.600} />copy sheets</Cmd>
        <Cmd aria-label="Send folder"><svg width="13" height="13"><path d="M3 9.500H.5v-9h3l1 1.500h4v3M.5 4h4M4.500 5.500h8v7h-8zM4.500 6.500l4 3 4-3" fill="none" stroke="#444" /></svg></Cmd>
        <GroupName>New Group</GroupName>
      </XlGroup>
      <BigButton>
        <svg width="25" height="25"><circle cx="12.500" cy="12.500" r="11.800" fill="#fff" stroke="#3a7ab8" /><circle cx="12.500" cy="12.500" r="9" fill="#83bdec" stroke="#2569a8" strokeWidth="1.300" /></svg>
        <span>New<br />Group <InlineChevron size={7} /></span>
      </BigButton>
      <RibbonEnd aria-label="Ribbon options"><ChevronDown size={11} /></RibbonEnd>
    </XlRibbon>
    <FormulaRow>
      <FieldBox $w={84}><FieldInput aria-label="Name box" defaultValue="I4" /><ChevronDown size={10} /></FieldBox>
      <Ico $w={9}><svg width="2" height="10"><path d="M1 0v10" stroke="#555" strokeWidth="2" strokeDasharray="2 2" /></svg></Ico>
      <FxBox><X size={14} strokeWidth={1.300} /><Check size={14} strokeWidth={1.300} /><Fx>fx</Fx></FxBox>
      <FormulaBox><FieldInput aria-label="Formula" defaultValue="=ROUND(D4*E4*F4*G4; 2)" /><ChevronDown size={10} /></FormulaBox>
    </FormulaRow>
    <SheetArea>
      <VBar><Tri /><VThumb /><Tri r={180} /></VBar>
      <SheetBox>
        <Sheet dir="rtl">
          <thead>
            <tr><ColHead $w={22}><Tri r={-45} c="#c9c9c9" s={6} /></ColHead>{letters.map((l, i) => <ColHead key={i} $w={i === 9 ? 6 : undefined}>{l}</ColHead>)}</tr>
          </thead>
          <tbody>
            {Array.from({ length: 28 }, (_, r) => (
              <tr key={r}>
                <RowHead>{r + 1}</RowHead>
                {letters.map((_, c) => {
                  const t = sheet[r]?.[c] ?? '';
                  return <Cell key={c} $red={r > 1} $ar={r === 0 || (r === 1 && c === 1) || c === 2}>{t}</Cell>;
                })}
              </tr>
            ))}
          </tbody>
        </Sheet>
      </SheetBox>
    </SheetArea>
    <SheetTabs>
      <Tri r={-90} /><HThumb /><Tri r={90} />
      <Ico $w={31}><svg width="2" height="10"><path d="M1 0v10" stroke="#444" strokeWidth="2" strokeDasharray="2 2" /></svg></Ico>
      <Spring />
      <IconButton $w={22} aria-label="New sheet"><Plus size={13} /></IconButton>
      <Ico $w={33} />
      <SheetTab $on>Sheet2</SheetTab>
      <SheetTab>Sheet1</SheetTab>
      <Ico $w={19} />
      <IconButton $w={36} aria-label="Previous"><ChevronLeft size={11} color="#888" /></IconButton>
      <IconButton $w={18} aria-label="Next"><ChevronRight size={11} color="#888" /></IconButton>
      <Ico $w={13} />
      <Watermark>Activate Windows<WatermarkNote>Go to Settings to activate Windows.</WatermarkNote></Watermark>
    </SheetTabs>
    <XlStatus>
      <Ico $w={44}>Ready</Ico>
      <Ico $w={20}><svg width="12" height="11"><path d="M5 10.500H.5V.5h11V5M.5 3h11M2 5h3M2 7h2" fill="none" stroke="#444" /><circle cx="8.500" cy="7.500" r="2.500" fill="none" stroke="#444" /></svg></Ico>
      <Ico $w={10} />
      <Access><PersonStanding size={12} />Accessibility: Investigate</Access>
      <Spring />
      <ViewBtn $on aria-label="Normal view"><Grid3x3 size={13} /></ViewBtn>
      <ViewBtn aria-label="Page layout view"><svg width="12" height="12"><path d="M.5.5h11v11H.5zM3 2.500h6v7H3zM4.500 4.500h3M4.500 6.500h3" fill="none" stroke="#444" /></svg></ViewBtn>
      <ViewBtn aria-label="Page break view"><svg width="12" height="12"><path d="M.5.5h11v11H.5zM3.500 1v6h5V1" fill="none" stroke="#444" /></svg></ViewBtn>
      <Ico $w={18}><Minus size={8} /></Ico>
      <Zoom type="range" aria-label="Zoom" defaultValue={50} />
      <Ico $w={12}><Plus size={9} /></Ico>
      <Ico $w={34}>100%</Ico>
      <Ico $w={8} />
    </XlStatus>
  </XlWindow>
);

export default function App() {
  return (
    <Page>
      <Global />
      <Desktop>
        <CadApp />
        <XlApp />
      </Desktop>
      <Taskbar>
        <StartButton aria-label="Start"><FaWindows size={14} /></StartButton>
        <TaskSearch>
          <Loupe size={15} strokeWidth={1.600} />
          <TaskInput placeholder="Type here to search" />
          <Sparkles />
        </TaskSearch>
        <TaskButton $w={40} aria-label="Task view"><svg width="15" height="14"><path d="M1 1v2h8V1M1 13v-2h8v2M1 4.500h8v5H1zM12.500 0v14M11 5h3" fill="none" stroke="#ddd" /></svg></TaskButton>
        <TaskButton $w={44} aria-label="Calculator"><CalcIcon /></TaskButton>
        <TaskButton $w={39} aria-label="Device"><DeviceIcon /></TaskButton>
        <TaskButton $w={44} aria-label="Messenger"><FaFacebookMessenger size={19} color="#2b8cff" /></TaskButton>
        <TaskButton $w={40} aria-label="Telegram"><svg width="18" height="18"><circle cx="9" cy="9" r="9" fill="#2ba0da" /><FaTelegramPlane x="3" y="4" size={11} color="#fff" /></svg></TaskButton>
        <TaskButton $w={42} aria-label="WhatsApp"><svg width="27" height="24"><FaWhatsapp x="1" y="1" size={20} color="#2fd566" /><circle cx="21" cy="17" r="6" fill="#2c2c2e" stroke="#8a8a8a" /><text x="21" y="20" fontSize="8" textAnchor="middle" fill="#fff">1</text></svg></TaskButton>
        <TaskButton $w={42} aria-label="Chrome"><ChromeIcon /></TaskButton>
        <TaskButton $w={40} $open $hot aria-label="AutoCAD"><CadLogo s={19} sub /></TaskButton>
        <Ico $w={4} />
        <TaskButton $w={34} $open aria-label="Excel"><ExcelLogo s={19} /></TaskButton>
        <Ico $w={8} />
        <TaskButton $w={33} $open aria-label="Recorder"><Recorder /></TaskButton>
        <Spring />
        <Weather>
          <svg width="19" height="20"><circle cx="8" cy="11" r="7.500" fill="#f49a2a" /><path d="M7 17q-1-4 3-4 3-3 5 0 4 0 3 4z" fill="#dfe9f7" /><circle cx="13" cy="5.500" r="5" fill="#d03a28" /><text x="13" y="8.500" fontSize="8" textAnchor="middle" fill="#fff">1</text></svg>
          <span>31°C</span><span dir="rtl">مشمس غالبًا</span>
        </Weather>
        <Ico $w={20}><ChevronUp size={13} /></Ico>
        <Ico $w={20}><svg width="11" height="14"><path d="M.5 3.500h7v7h-7zM7.500 5h3v4h-3M2 1h5M2 13h5" fill="none" stroke="#ddd" /></svg></Ico>
        <Ico $w={20}><svg width="15" height="14"><path d="M1 9q-1-4 3-4 2-4 6-1 4 0 3 5z" fill="#aaa" /><circle cx="10" cy="9.500" r="4.500" fill="#2a9de0" /><path d="M10 7v1M10 9v3" stroke="#fff" strokeWidth="1.300" /></svg></Ico>
        <Ico $w={19}><Mic size={14} fill="#eee" /></Ico>
        <Ico $w={21}><svg width="14" height="10"><path d="M3.500 2.500h9v6h-9z" fill="#ddd" stroke="#ddd" /><path d="M0 1h4M2 0v5" stroke="#ddd" /></svg></Ico>
        <Ico $w={20}><Signal size={13} color="#aaa" /></Ico>
        <Ico $w={20}><Volume2 size={14} strokeWidth={1.500} /></Ico>
        <Ico $w={28}>ENG</Ico>
        <Clock>02:12 م<br />٢٠٢٥/٠٦/٠٥</Clock>
        <Ico $w={37}><svg width="22" height="22"><path d="M3 3h13v10H9l-3 3v-3H3z" fill="#fff" /><path d="M5 5.500h9M5 8h9M5 10.500h6" stroke="#333" /><circle cx="15" cy="15" r="5.500" fill="#333" stroke="#999" /><text x="15" y="18" fontSize="8" textAnchor="middle" fill="#fff">1</text></svg></Ico>
        <Ico $w={2} />
      </Taskbar>
      <ChannelLogo><QsLogo /></ChannelLogo>
    </Page>
  );
}
